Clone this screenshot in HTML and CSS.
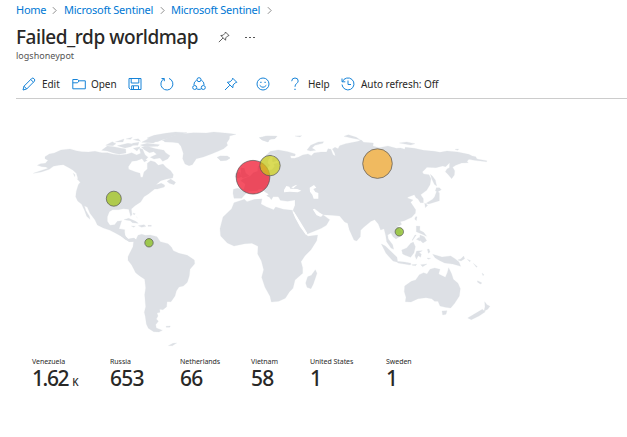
FILE: index.html
```html
<!DOCTYPE html>
<html lang="en">
<head>
<meta charset="utf-8">
<title>Failed_rdp worldmap</title>
<link rel="stylesheet" href="styles.css">
</head>
<body>
<svg class="defs" aria-hidden="true">
  <symbol id="pin" viewBox="0 0 14 14"><path d="M8.7 1.2 12.8 5.3 11.3 5.8 9.1 8 8.8 10.8 3.3 5.3 6 4.9 8.2 2.7ZM5.8 8.2 1 13"/></symbol>
  <symbol id="chevron" viewBox="0 0 6 10"><path d="M1 1 5 5 1 9"/></symbol>
</svg>
<nav class="crumbs">
  <a>Home</a><svg class="chev"><use href="#chevron"/></svg>
  <a class="crumb-long">Microsoft Sentinel</a><svg class="chev"><use href="#chevron"/></svg>
  <a class="crumb-long">Microsoft Sentinel</a><svg class="chev"><use href="#chevron"/></svg>
</nav>
<header class="heading">
  <h1>Failed_rdp worldmap</h1>
  <svg class="icon title-pin"><use href="#pin"/></svg>
  <span class="more"><i></i><i></i><i></i></span>
</header>
<div class="subtitle">logshoneypot</div>
<div class="toolbar">
  <svg class="icon" viewBox="0 0 14 14"><path d="M1 13 2 9.2 9.7 1.5Q10.8.5 12 1.7 13.4 2.9 12.4 4.2L4.7 12ZM2 9.2 4.7 12M8.7 2.5 11.5 5.2"/></svg>
  <span class="edit">Edit</span>
  <svg class="icon" viewBox="0 0 14 14"><path d="M.8 11.8V2.5H5.5L7 3.8H13.3V11.8ZM.8 5.8H5.5L7 4"/></svg>
  <span class="open">Open</span>
  <svg class="icon" viewBox="0 0 14 14"><path d="M1 1.5H13V12.5H2.5L1 11ZM3.2 1.5V6H10.8V1.5M3.7 12.5V8.8H10.5V12.5M5.5 9V12"/></svg>
  <svg class="icon" viewBox="0 0 14 14"><path d="M4.3 1.5H1.5M4.3 1.5V4.2M4.1 1.7A6 6 0 1 0 9 1.4"/></svg>
  <svg class="icon" viewBox="0 0 14 14"><path d="M4.7 3.1A5.3 5.3 0 0 0 1.9 8M9.3 3.1A5.3 5.3 0 0 1 12.1 8M4.6 11.9Q7 13 9.4 11.9"/><circle cx="7" cy="2.7" r="2"/><circle cx="2.7" cy="10.5" r="2"/><circle cx="11.3" cy="10.5" r="2"/></svg>
  <svg class="icon"><use href="#pin"/></svg>
  <svg class="icon" viewBox="0 0 14 14"><circle cx="7" cy="7" r="6"/><path d="M3.7 8.3Q7 12.2 10.3 8.3"/><path class="dots" d="M4.3 5.3H5.5M8.5 5.3H9.7"/></svg>
  <svg class="icon" viewBox="0 0 14 14"><path d="M3.7 4.2Q3.8 1 7 1 10.2 1 10.2 4 10.2 5.3 8.5 6.6 7 7.7 7 9.8"/><path class="dots" d="M6.4 12.4H7.6"/></svg>
  <span class="help">Help</span>
  <svg class="icon" viewBox="0 0 14 14"><path d="M1 1.5V4.8H4.3M1.4 4.7A6 6 0 1 1 1 7.5M7 3.5V7.5H10"/></svg>
  <span class="auto">Auto refresh: Off</span>
</div>
<main>
<svg class="map" viewBox="0 100 500 250" role="img" aria-label="World map">
  <g class="land">
    <g transform="translate(20 120) scale(.33333)">
      <path d="M40 160 62 152 84 145 78 141 66 140 52 136 62 131 76 130 84 121 75 116 75 110 88 102 103 99 123 90 150 87 168 92 185 95 205 96 225 94 245 98 262 98 280 103 300 105 320 103 335 98 350 105 362 100 358 84 368 88 375 104 384 112 377 119 365 116 350 122 336 124 325 140 326 148 345 155 360 160 362 172 368 172 372 156 382 147 382 130 392 122 405 126 415 136 429 132 438 142 452 152 460 164 458 174 440 177 422 182 408 194 424 190 434 195 433 201 412 207 404 207 385 222 372 230 362 246 345 257 334 267 336 284 332 289 326 268 310 266 295 269 278 269 268 275 262 290 262 304 270 316 284 314 292 304 305 302 300 318 297 326 314 329 314 346 324 357 342 355 351 362 345 365 327 365 306 350 290 341 270 331 250 324 232 315 225 300 210 280 202 262 193 257 198 272 208 289 210 298 200 289 194 272 185 253 173 243 167 230 169 214 175 194 182 185 174 176 169 160 158 150 148 144 130 134 115 136 100 139 88 148 64 156ZM171 176 183 180 188 190 179 185ZM160 160 165 164 164 170ZM441 184 452 177 467 187 462 194 448 190ZM245 91 262 78 281 80 300 84 317 87 318 99 298 103 280 99 262 93ZM257 76 277 65 288 71 279 77ZM286 66 312 57 309 66ZM292 77 324 70 345 73 332 80 315 84ZM337 70 357 67 354 76 340 76ZM340 85 361 80 351 93ZM364 81 386 80 407 86 432 91 437 98 450 107 443 117 428 124 420 114 402 117 391 112 410 103 401 95 388 98 373 89ZM361 75 381 70 419 74 414 79 374 80ZM365 67 385 56 413 62 400 69ZM381 54 402 46 436 40 466 36 501 38 481 44 457 49 446 55 425 60 413 65 393 61ZM318 57 337 52 332 58ZM340 59 355 56 362 64ZM367 117 382 121 373 126ZM312 299 326 295 347 304 355 310 337 308 331 302ZM355 317 372 314 378 319 365 322ZM384 316H394V319H384ZM334 318 346 319 341 322ZM339 279 346 281 342 285ZM349 289 352 295M425 60 439 60 437 64Z"/>
    </g>
    <g transform="translate(120 120) scale(.33333)">
      <path d="M130 60 156 49 177 42 221 38 260 39 281 36 315 39 348 43 329 48 328 57 320 69 323 76 311 86 294 94 274 102 250 111 229 116 217 134 207 137 195 132 188 116 190 100 183 79 175 69 158 67 134 66ZM291 112 302 108 322 108 330 114 321 120 301 122 297 116ZM418 53 441 48 471 49 464 56 449 58 444 66 426 60Z"/>
    </g>
    <g transform="translate(120 230) scale(.33333)">
      <path d="M0 10 13 8 17 21 26 28 42 24 48 29 54 16 65 13 76 16 91 15 111 20 121 35 144 41 154 51 160 62 177 70 202 76 223 90 224 101 210 118 208 137 202 157 190 168 177 171 169 183 165 198 153 215 141 215 140 230 129 239 119 238 120 247 111 249 114 258 109 267 115 274 107 284 109 294 127 301 117 306 101 305 85 295 79 282 76 260 73 247 77 230 74 194 77 174 74 148 58 137 47 128 35 105 24 91 24 80 31 66 39 50 41 33 30 35 15 28 0 15ZM138 289 151 288 149 292 139 292ZM145 347 159 340 170 339 157 347Z"/>
    </g>
    <g transform="translate(210 120) scale(.33333)">
      <path d="M70 208 83 205 102 208 106 192 92 182 100 176 120 169 130 158 143 154 144 139 151 137 154 151 168 151 186 149 194 139 191 132 205 129 202 122 188 126 187 115 195 104 187 104 175 119 173 129 180 136 169 147 163 133 152 133 149 124 165 109 181 94 205 90 234 95 256 102 255 108 241 107 243 115 254 115 266 111 278 105 294 102 304 107 312 99 333 96 350 96 354 86 363 88 369 104 376 108 374 99 367 87 375 82 384 86 389 77 407 71 445 64 453 59 461 67 490 69 489 78 507 83 534 78 559 85 572 84 584 88 586 82 613 85 641 91 673 94 690 97 711 93 743 96 776 103 787 108 797 110 801 117 830 122 830 125 793 121 777 118 771 124 775 128 755 129 737 136 728 142 734 152 733 165 725 176 713 162 706 155 711 147 718 143 719 128 707 140 698 138 678 143 651 142 637 156 641 162 657 164 663 176 660 194 650 211 632 224 640 236 640 248 631 248 624 237 618 233 613 224 595 231 592 234 609 240 602 247 610 259 617 269 616 280 605 292 583 302 566 306 558 312 567 326 575 335 573 347 558 357 549 350 543 339 533 345 535 357 548 374 551 388 543 384 530 365 527 346 522 326 512 330 505 312 494 299 483 304 462 321 452 331 451 350 440 363 432 360 418 329 413 310 404 306 389 288 366 286 337 284 324 274 314 266 308 268 318 282 330 290 340 285 359 299 349 316 334 325 292 342 280 326 263 295 249 271 255 256 255 240 233 244 211 241 205 230 189 230 184 239 173 225 163 217 151 206 159 204 168 211 180 222 187 234 170 229 158 213 147 207 142 212 127 216 112 216 103 226 95 235 72 235 69 220Z"/>
      <path d="M77 160 90 156 94 170 84 175 75 170ZM92 143 103 145 107 159 118 168 98 174 94 170ZM23 113 31 108 50 109 60 114 50 121 33 122ZM148 53 171 48 201 49 194 56 179 58 174 66 157 60ZM255 48 275 47 270 51ZM291 90 302 76 325 66 341 65 338 70 315 76 306 84 317 91 302 93ZM402 49 415 44 439 52 450 59 424 54ZM568 69 590 66 615 71 602 75ZM735 88 746 87 743 91ZM661 163 667 168 676 180 680 198 673 193 666 178ZM679 203 688 203 694 209 684 215 676 213ZM680 214 688 218 688 242 676 246 666 249 656 252 648 250 656 245 668 238 674 230ZM644 249 653 256 646 263ZM617 290 621 290 619 302 614 297ZM556 309 571 305 575 313 566 319 558 314ZM619 318 630 319 629 331 641 337 650 349 640 344 619 335ZM630 345 643 350 650 362 639 369 629 360ZM628 352 630 363 619 358ZM606 361 615 345 619 345 608 361ZM514 372 526 378 547 398 561 412 563 427 549 423 528 400ZM575 390 590 384 602 370 610 366 616 380 612 398 602 412 586 406 578 402ZM560 424 583 426 603 430 601 435 564 429ZM620 393 637 392 627 398 634 402 632 412 625 407 619 418 615 407ZM605 434 620 433 617 437 607 436ZM632 434 651 432 638 440ZM652 388 657 387 660 396 655 400ZM651 414 662 415 655 418ZM668 403 686 408 696 411 722 408 735 416 747 426 752 439 728 432 704 429 687 421 675 413ZM743 420 752 417 761 408 764 416 753 423ZM772 418 782 422 779 425ZM790 430 802 440 799 442ZM816 459 822 464 819 467ZM803 482 816 489 811 492 802 486Z"/>
      <path d="M103 238 111 245 134 238 156 236 153 252 170 261 191 269 197 261 220 268 247 271 256 293 269 314 286 342 294 349 323 345 320 362 303 389 285 407 273 425 278 443 278 460 255 480 249 505 238 516 226 535 206 544 184 546 180 529 165 502 155 472 161 449 154 422 143 402 144 379 126 370 105 371 72 378 52 369 32 348 30 326 39 291 65 266 72 248ZM316 449 321 460 310 492 303 506 291 502 287 489 293 470 304 466Z"/>
      <path d="M584 498 604 484 617 480 628 464 641 458 651 462 660 448 674 444 690 448 686 462 706 472 712 458 716 443 725 462 730 478 744 490 751 506 748 528 734 550 722 564 706 562 690 558 684 544 674 544 665 536 648 533 624 536 603 546 586 545 588 532 583 515ZM696 573 711 572 708 583 698 585ZM824 545 831 554 840 559 833 568 822 574 825 560ZM817 568 826 575 807 588 784 599 773 594Z"/>
    </g>
  </g>
  <g class="water" transform="translate(210 120) scale(.33333)">
    <path d="M222 210 229 198 238 200 241 206 262 207 274 212 263 217 239 215 222 217ZM244 202 256 196 262 194 250 205ZM299 203 312 195 319 203 310 207 316 216 325 219 325 236 311 236 307 224 300 215ZM112 215 127 213 148 212 151 224 160 235 136 237 105 238ZM149 209 155 207 165 216 176 223 169 227 180 235 170 236 160 231Z"/>
    <path d="M247 274 253 277 270 304 292 340 288 344 270 320 256 294ZM308 266 320 276 338 283 334 290 320 286Z"/>
  </g>
  <g class="marks">
    <circle cx="253" cy="177.2" r="16.8" fill="#f00f28"/><circle cx="270" cy="165.6" r="10.2" fill="#cccd16"/><circle cx="377.5" cy="163.6" r="14.8" fill="#f6ab2d"/><circle cx="113.8" cy="198.7" r="7.5" fill="#9cc112"/><circle cx="149" cy="242.8" r="4.2" fill="#83bd13"/><circle cx="399.3" cy="231.8" r="4.2" fill="#83bd13"/>
  </g>
</svg>
<section class="stats">
  <div><label>Venezuela</label><b class="compact">1.62<small>K</small></b></div>
  <div><label>Russia</label><b>653</b></div>
  <div><label>Netherlands</label><b>66</b></div>
  <div><label>Vietnam</label><b>58</b></div>
  <div><label>United States</label><b>1</b></div>
  <div><label>Sweden</label><b>1</b></div>
</section>
</main>
</body>
</html>
```
FILE: styles.css
```css
* { box-sizing: border-box; }
body { margin: 0; background: #fff; color: #292827; font-family: "Noto Sans", "Open Sans", sans-serif; width: 627px; height: 437px; overflow: hidden; }
.defs { display: none; }
.crumbs { height: 22px; padding: 0 0 3px 16px; display: flex; align-items: center; font-size: 11px; color: #0078d4; white-space: nowrap; }
.crumbs a { width: 30px; letter-spacing: -.25px; }
.crumbs .crumb-long { width: 90px; letter-spacing: -.23px; }
.chev { width: 5px; height: 9px; margin: 1px 7px 0 6px; fill: none; stroke: #777; }
.crumb-long + .chev { margin-right: 6px; }
.heading { height: 30px; padding-left: 16px; display: flex; align-items: center; }
h1 { margin: 0; width: 202px; font-size: 19px; line-height: 28px; font-weight: 500; letter-spacing: -.46px; white-space: nowrap; }
.icon { width: 14px; height: 14px; fill: none; stroke: #1683d8; stroke-width: 1; }
.title-pin { width: 12px; height: 12px; stroke: #444; }
.more { display: flex; gap: 2px; margin-left: 15px; }
.more i { width: 2px; height: 1px; background: #555; }
.subtitle { padding-left: 16px; height: 13px; line-height: 8px; font-size: 9px; color: #555; letter-spacing: .02px; }
.toolbar { height: 34px; margin-left: 16px; padding: 4px 0 0 6px; border-bottom: 1px solid #ccc; display: grid; grid-template-columns: 20px 30px 19px 37px 32px 32px 32px 32px 32px 20px 33px 20px auto; align-items: center; font-size: 10px; letter-spacing: -.05px; white-space: nowrap; }
.dots { stroke-width: 1.3; }
.map { display: block; width: 500px; height: 250px; margin-top: 1px; }
.land { fill: #dde0e5; stroke: #dde0e5; stroke-width: .7; }
.water { fill: #fff; }
.marks { fill-opacity: .72; stroke: #555; stroke-width: 1; stroke-opacity: .7; }
.stats { padding: 6px 0 0 32px; display: grid; grid-template-columns: 78px 70px 71px 59px 76px 60px; }
.stats label { display: block; height: 11px; line-height: 11px; font-size: 7px; letter-spacing: -.05px; white-space: nowrap; }
.stats b { display: block; margin-top: -1px; font-size: 21px; line-height: 24px; font-weight: 500; letter-spacing: -.7px; }
.stats .compact { letter-spacing: -1.4px; }
.stats small { font-size: 10px; margin-left: 4px; letter-spacing: 0; }
```
